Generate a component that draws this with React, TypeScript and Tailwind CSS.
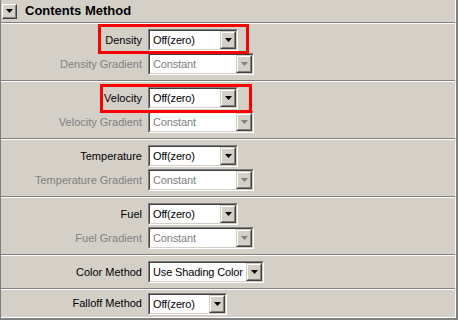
import type { ReactNode } from 'react'

// Classic Win32 property panel: "Contents Method" with combo boxes.

const face = "font-['Liberation_Sans',Tahoma,sans-serif]"

function Arrow({ disabled }: { disabled?: boolean }) {
  return (
    <svg width="7" height="4" viewBox="0 0 7 4" className="block">
      <polygon points="0,0 7,0 3.5,4" fill={disabled ? '#808080' : '#000'} />
    </svg>
  )
}

function DropButton({ disabled }: { disabled?: boolean }) {
  return (
    <div className="h-full w-4 shrink-0 border border-t-[#d4d0c8] border-l-[#d4d0c8] border-r-[#404040] border-b-[#404040]">
      <div className="flex h-full w-full items-center justify-center border border-t-white border-l-white border-r-[#808080] border-b-[#808080] bg-[#d4d0c8]">
        <Arrow disabled={disabled} />
      </div>
    </div>
  )
}

function Combo({ value, width, disabled }: { value: string; width: string; disabled?: boolean }) {
  return (
    <div className={`${width} flex h-[22px] border border-t-[#808080] border-l-[#808080] border-r-white border-b-white`}>
      <div className="flex min-w-0 flex-1 border border-t-[#404040] border-l-[#404040] border-r-[#d4d0c8] border-b-[#d4d0c8] bg-white">
        <span
          className={`min-w-0 flex-1 overflow-hidden whitespace-nowrap pl-[3px] text-[11px] leading-[18px] tracking-[-0.15px] ${disabled ? 'text-[#808080]' : 'text-black'}`}
        >
          {value}
        </span>
        <DropButton disabled={disabled} />
      </div>
    </div>
  )
}

function Row({ label, children, disabled }: { label: string; children: ReactNode; disabled?: boolean }) {
  return (
    <div className="flex h-6 items-center">
      <span className={`w-[141px] shrink-0 text-right text-[11px] ${disabled ? 'text-[#808080]' : 'text-black'}`}>
        {label}
      </span>
      <div className="ml-[6px]">{children}</div>
    </div>
  )
}

function Sep() {
  return <div className="h-[2px] border-t border-b border-t-[#808080] border-b-white" />
}

function Pair({ name }: { name: string }) {
  return (
    <div className="flex h-14 flex-col justify-center">
      <Row label={name}>
        <Combo value="Off(zero)" width="w-[90px]" />
      </Row>
      <Row label={`${name} Gradient`} disabled>
        <Combo value="Constant" width="w-[106px]" disabled />
      </Row>
    </div>
  )
}

export default function App() {
  return (
    <div className={`${face} relative h-[320px] w-[458px] overflow-hidden border-b-2 border-l border-r-2 border-[#808080] bg-[#d4d0c8]`}>
      <div className="flex h-full flex-col border-b border-r border-b-white border-r-white">
        <div className="flex h-[22px] shrink-0 items-center">
          <div className="ml-[1px] h-[15px] w-[15px] border border-t-white border-l-white border-r-[#404040] border-b-[#404040]">
            <div className="flex h-full w-full items-center justify-center border-r border-b border-r-[#808080] border-b-[#808080] bg-[#d4d0c8]">
              <Arrow />
            </div>
          </div>
          <span className="ml-[8px] text-[13px] font-bold text-black">Contents Method</span>
        </div>
        <Sep />
        <Pair name="Density" />
        <Sep />
        <Pair name="Velocity" />
        <Sep />
        <Pair name="Temperature" />
        <Sep />
        <Pair name="Fuel" />
        <Sep />
        <div className="flex h-8 items-center">
          <div className="w-full">
            <Row label="Color Method">
              <Combo value="Use Shading Color" width="w-[116px]" />
            </Row>
          </div>
        </div>
        <Sep />
        <div className="flex flex-1 items-center">
          <div className="w-full">
            <Row label="Falloff Method">
              <Combo value="Off(zero)" width="w-[79px]" />
            </Row>
          </div>
        </div>
      </div>

      {/* annotation boxes */}
      <div className="pointer-events-none absolute left-[97px] top-[24px] h-[30px] w-[151px] border-[3px] border-[#ff0000]" />
      <div className="pointer-events-none absolute left-[99px] top-[84px] h-[29px] w-[152px] border-[3px] border-[#ff0000]" />
    </div>
  )
}
